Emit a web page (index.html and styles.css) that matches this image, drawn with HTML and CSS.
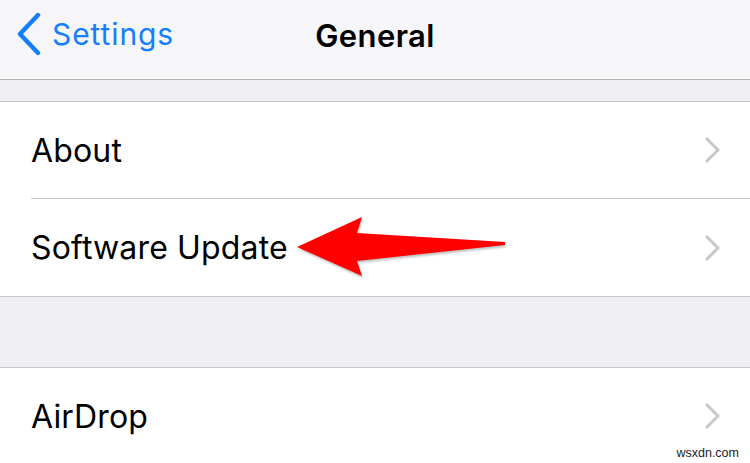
FILE: index.html
```html
<!DOCTYPE html>
<html>
<head>
<meta charset="utf-8">
<link rel="stylesheet" href="styles.css">
</head>
<body>
<div class="screen">
  <header class="nav">
    <div class="back">
      <svg class="back-icon" width="30" height="44" viewBox="0 0 30 44"><polyline points="22,2 4,21 22,40" fill="none" stroke="#157efb" stroke-width="4.4" stroke-linecap="round" stroke-linejoin="round"/></svg>
      <span class="back-label">Settings</span>
    </div>
    <div class="title">General</div>
  </header>
  <div class="gap gap-top"></div>
  <section class="group">
    <div class="row">
      <span class="label">About</span>
      <svg class="chev" width="16" height="28" viewBox="0 0 16 28"><polyline points="2,2 14,14 2,26" fill="none" stroke="#c7c7cc" stroke-width="3"/></svg>
    </div>
    <div class="sep"></div>
    <div class="row row-tall">
      <span class="label">Software Update</span>
      <svg class="chev" width="16" height="28" viewBox="0 0 16 28"><polyline points="2,2 14,14 2,26" fill="none" stroke="#c7c7cc" stroke-width="3"/></svg>
    </div>
  </section>
  <div class="gap gap-mid"></div>
  <section class="group group-last">
    <div class="row">
      <span class="label">AirDrop</span>
      <svg class="chev" width="16" height="28" viewBox="0 0 16 28"><polyline points="2,2 14,14 2,26" fill="none" stroke="#c7c7cc" stroke-width="3"/></svg>
    </div>
  </section>
  <svg class="arrow" width="750" height="463" viewBox="0 0 750 463"><polygon points="297,247 362,217 357,233 505,242 505,245 357,261 362,276" fill="#fe0000"/></svg>
  <div class="watermark">wsxdn.com</div>
</div>
</body>
</html>
```

FILE: styles.css
```css
html, body {
  margin: 0;
  padding: 0;
  background: #ffffff;
}
.screen {
  position: relative;
  width: 750px;
  height: 463px;
  overflow: hidden;
  font-family: Inter, "Liberation Sans", sans-serif;
}
.nav {
  position: relative;
  height: 79px;
  background: #f6f6f8;
  border-bottom: 1px solid #b2b2b2;
  display: flex;
  align-items: center;
  justify-content: center;
}
.back {
  position: absolute;
  left: 16px;
  top: 13px;
  display: flex;
  align-items: center;
  gap: 6px;
}
.back-label {
  color: #157efb;
  font-size: 30px;
  letter-spacing: 0.9px;
  line-height: 44px;
  margin-top: -2px;
}
.title {
  font-size: 31px;
  font-weight: 600;
  color: #000;
  margin-top: -9px;
  letter-spacing: 0.4px;
}
.gap {
  background: #efeff4;
}
.gap-top {
  height: 21px;
}
.gap-mid {
  height: 70px;
}
.group {
  border-top: 1px solid #c8c7cc;
  border-bottom: 1px solid #c8c7cc;
  background: #fff;
}
.group-last {
  border-bottom: none;
}
.row {
  height: 96px;
  display: flex;
  align-items: center;
  justify-content: space-between;
  padding: 0 30px 0 31px;
}
.row-tall {
  height: 97px;
}
.label {
  font-size: 32px;
  color: #000;
  letter-spacing: 0.15px;
}
.chev {
  display: block;
}
.sep {
  height: 1px;
  margin-left: 31px;
  background: #c8c7cc;
}
.arrow {
  position: absolute;
  left: 0;
  top: 0;
  filter: drop-shadow(1px 2px 1px rgba(0,0,0,0.25));
}
.watermark {
  position: absolute;
  right: 11px;
  bottom: 3px;
  font-family: "Liberation Sans", Arial, sans-serif;
  font-size: 12.5px;
  color: #222;
}
```
